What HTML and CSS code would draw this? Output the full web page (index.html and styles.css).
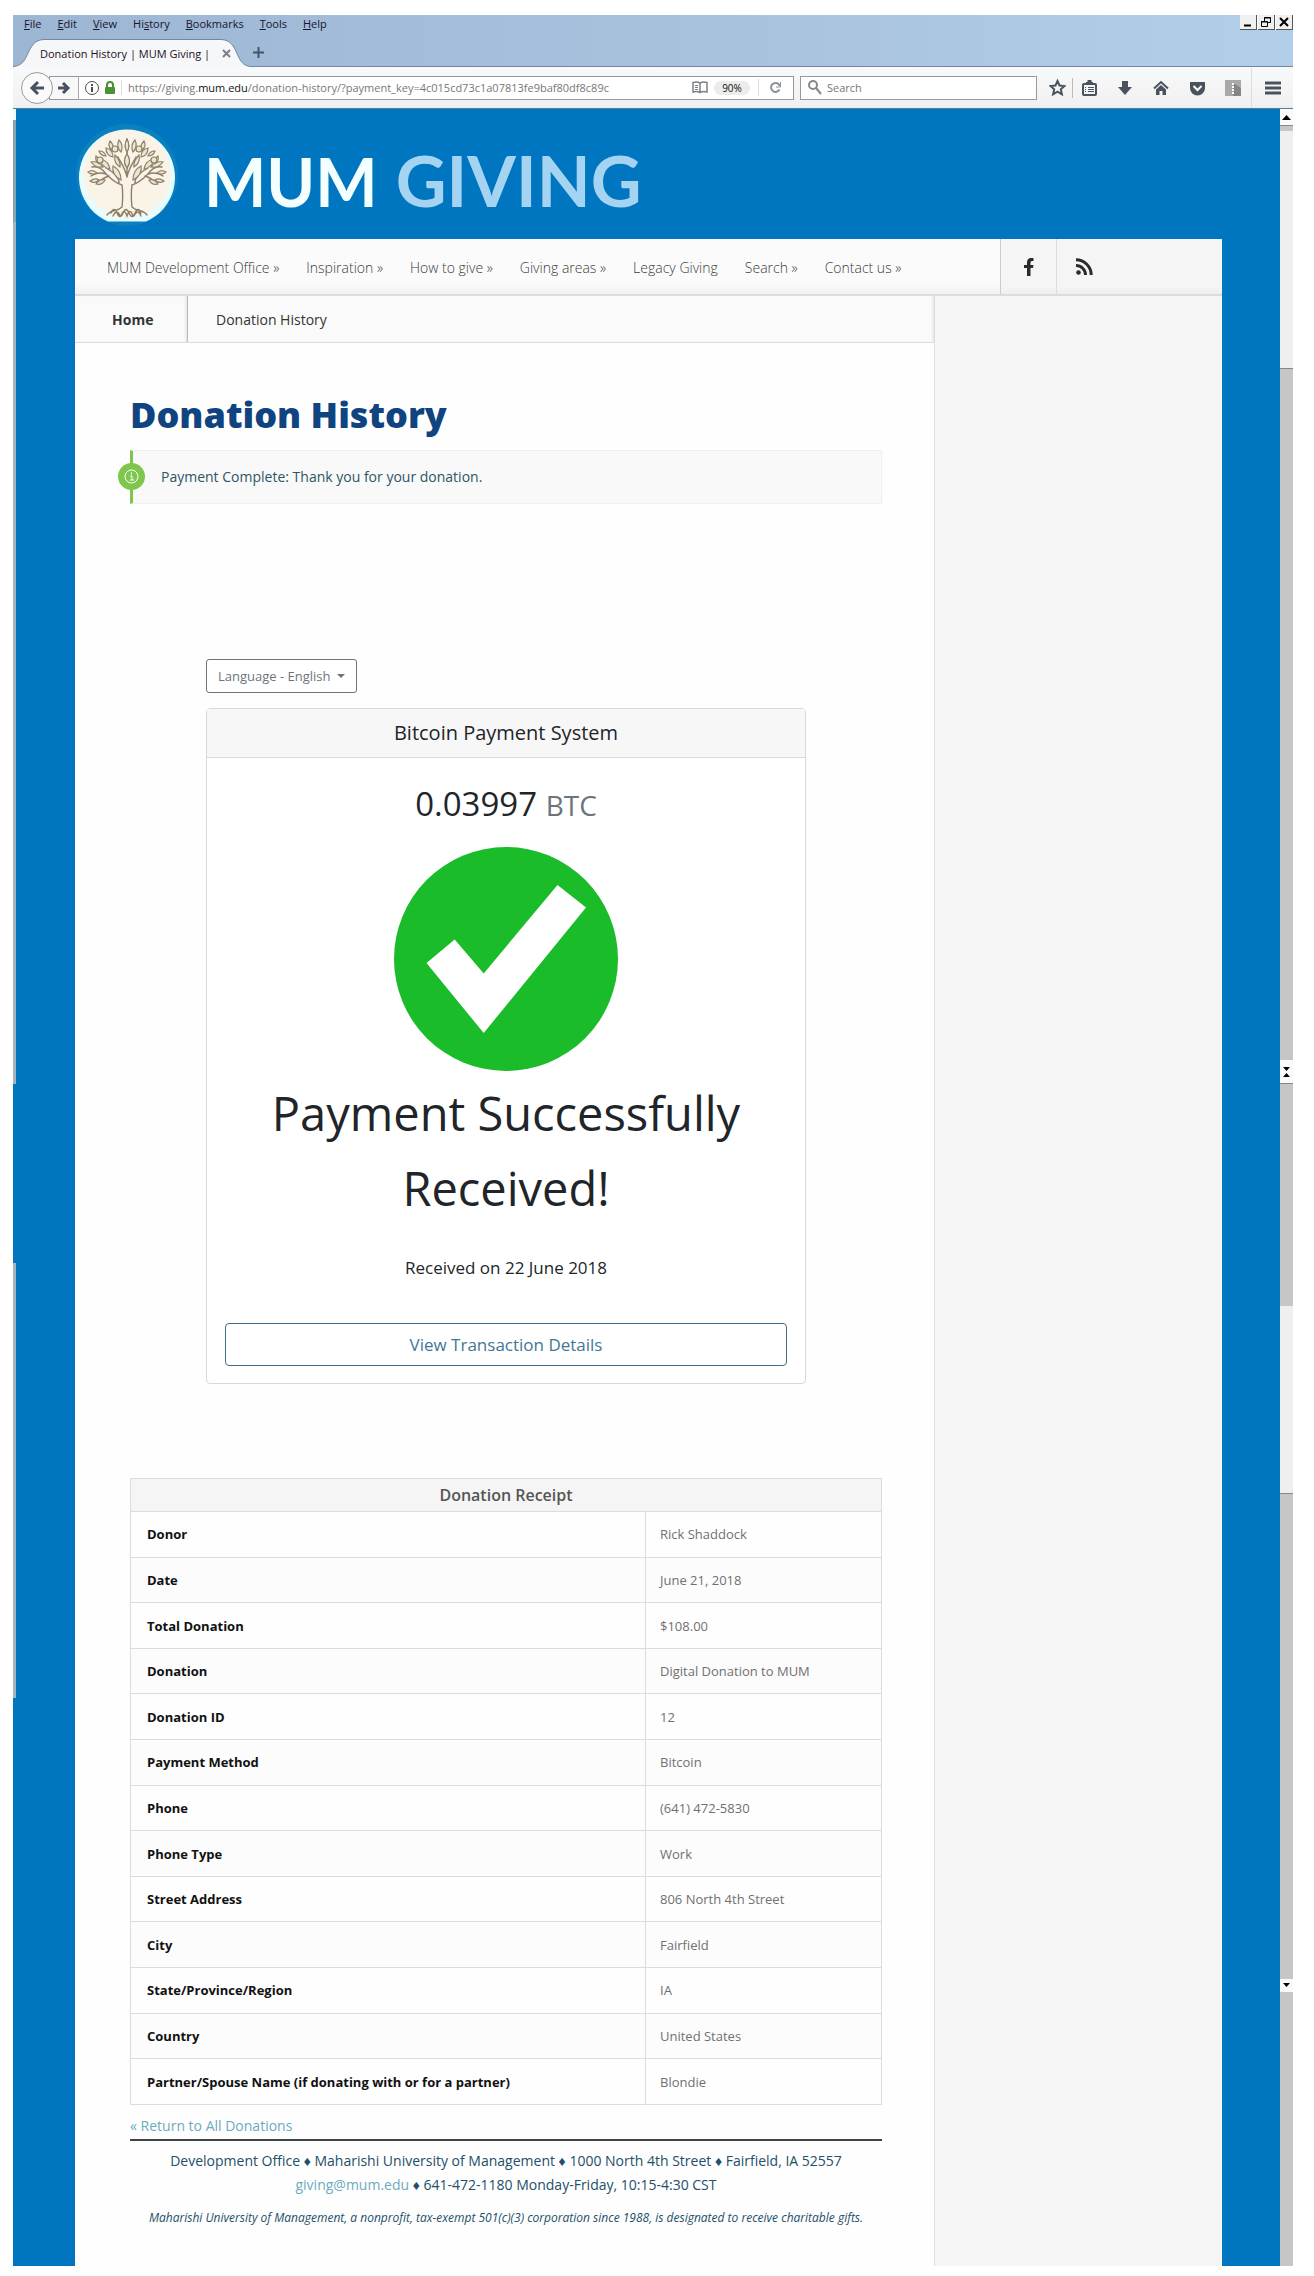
FILE: index.html
```html
<!DOCTYPE html>
<html lang="en">
<head>
<meta charset="utf-8">
<title>Donation History | MUM Giving</title>
<link rel="stylesheet" href="styles.css">
</head>
<body>
<div class="window">
  <header class="chrome">
    <div class="titlebar">
      <nav class="menu" aria-label="Menu bar">
        <button><u>F</u>ile</button><button><u>E</u>dit</button><button><u>V</u>iew</button><button>Hi<u>s</u>tory</button><button><u>B</u>ookmarks</button><button><u>T</u>ools</button><button><u>H</u>elp</button>
      </nav>
      <div class="controls">
        <button aria-label="Minimize"><svg width="12" height="12"><path d="M2 9.500h7" stroke="#000" stroke-width="2"/></svg></button>
        <button aria-label="Restore"><svg width="12" height="12" fill="none" stroke="#000"><path d="M4.500 5V1.500h6v5H8M4 2h7M1.500 5.500h6v5h-6zM1 6h7"/></svg></button>
        <button aria-label="Close"><svg width="12" height="12"><path d="M2 2l8 8M10 2l-8 8" stroke="#000" stroke-width="2"/></svg></button>
      </div>
    </div>
    <div class="tabs">
      <div class="tab">
        <svg class="tab-shape" width="238" height="28" aria-hidden="true"><path d="M0 27.500C18 27 12 1 31 .5H208C227 1 221 27 238 27.500V28H0z" fill="#f6f7f8"/><path d="M0 27.500C18 27 12 1 31 .5H208C227 1 221 27 238 27.500" fill="none" stroke="#75879c"/></svg>
        <span class="tab-title">Donation History | MUM Giving |</span>
        <button class="plain" aria-label="Close tab"><svg width="9" height="9"><path d="M1 1l7 7M8 1l-7 7" stroke="#7b8086" stroke-width="2"/></svg></button>
      </div>
      <button class="plain new-tab" aria-label="New tab"><svg width="11" height="11"><path d="M5.500 0v11M0 5.500h11" stroke="#45546a" stroke-width="2"/></svg></button>
    </div>
    <div class="toolbar">
      <button class="back" aria-label="Back"><svg width="16" height="16" fill="none" stroke="#4a5260" stroke-width="3"><path d="M9 2L3 8l6 6M3 8h12"/></svg></button>
      <div class="urlbar">
        <button class="plain forward" aria-label="Forward"><svg width="14" height="14" fill="none" stroke="#4a5260" stroke-width="3"><path d="M6 2l5 5-5 5M11 7H1"/></svg></button>
        <svg width="14" height="14" fill="none" stroke="#4c4c4c"><circle cx="7" cy="7" r="6.500"/><path d="M7 3v2M7 6v5" stroke-width="2"/></svg>
        <svg class="lock" width="12" height="14"><path d="M3 7V4a3 3 0 0 1 6 0v3" fill="none" stroke="#4c9034" stroke-width="2"/><rect x="1" y="6" width="10" height="7" rx="1" fill="#4c9034"/></svg>
        <span class="url">https://giving.<b>mum.edu</b>/donation-history/?payment_key=4c015cd73c1a07813fe9baf80df8c89c</span>
        <svg class="reader" width="16" height="13" fill="none" stroke="#7c8186" stroke-width="1.500"><path d="M8 11.500C6 10.500 3 10.500 1 11V1.500C3 1 6 1 8 2c2-1 5-1 7-.5V11C13 10.500 10 10.500 8 11.500zM8 2v9"/><path d="M3 4.500h3M3 6.500h3M3 8.500h3" stroke-width="1"/></svg>
        <span class="zoom">90%</span>
        <button class="plain reload" aria-label="Reload"><svg width="13" height="13" fill="none" stroke="#8b9299" stroke-width="2"><path d="M10.500 8.500A4.500 4.500 0 1 1 9.500 3L11 5"/><path d="M11.500 1v5H7" stroke-width="1"/></svg></button>
      </div>
      <div class="search">
        <svg width="15" height="15" fill="none" stroke="#85898d" stroke-width="2"><circle cx="6" cy="5" r="4"/><path d="M9 8l5 6"/></svg>
        <input type="text" placeholder="Search" aria-label="Search">
      </div>
      <div class="tools">
        <button class="plain star" aria-label="Bookmark"><svg width="17" height="17" fill="none" stroke="#4a5260" stroke-width="2"><path d="M8.500 2l2 4.500 5 .5-3.700 3.300 1.100 5-4.400-2.600-4.400 2.600 1.100-5L1.500 7l5-.5z"/></svg></button>
        <button class="plain" aria-label="Library"><svg width="15" height="16" fill="none" stroke="#4a5260"><rect x="1" y="4" width="13" height="11" rx="1" stroke-width="2"/><path d="M4 3h7M5.500 1h4" stroke-width="2"/><path d="M3 7.500h1M6 7.500h6M3 9.500h1M6 9.500h6M3 11.500h1M6 11.500h6"/></svg></button>
        <button class="plain" aria-label="Downloads"><svg width="16" height="16" fill="#4a5260"><path d="M5 1h6v6h4l-7 8-7-8h4z"/></svg></button>
        <button class="plain" aria-label="Home"><svg width="16" height="16"><path d="M1 8.500L8 2l7 6.500" fill="none" stroke="#4a5260" stroke-width="2"/><path d="M3 9.500L8 5l5 4.500V15H9.500v-4h-3v4H3z" fill="#4a5260"/></svg></button>
        <button class="plain" aria-label="Pocket"><svg width="17" height="16"><path d="M1 2h15v6a7 7 0 0 1-15 0z" fill="#4a5260"/><path d="M4.500 6l4 4 4-4" fill="none" stroke="#fff" stroke-width="2"/></svg></button>
        <button class="plain" aria-label="Add-on"><svg width="16" height="16"><path d="M0 0h16v16H0z" fill="#a9a9a9"/><path d="M8 3l8 5v8H8z" fill="#858585"/><path d="M8 3v11" stroke="#fff" stroke-width="2" stroke-dasharray="2 1"/></svg></button>
        <button class="plain burger" aria-label="Menu"><svg width="16" height="14" stroke="#4a5260" stroke-width="3"><path d="M0 2h16M0 7h16M0 12h16"/></svg></button>
      </div>
    </div>
  </header>

  <div class="viewport">
    <div class="edge" aria-hidden="true"><i class="pale"></i><i class="steel"></i><i class="silver"></i><i class="blue"></i><i class="silver low"></i><i class="blue end"></i></div>
    <div class="site">
      <div class="brand">
        <svg class="logo" width="104" height="104" viewBox="0 0 104 104" role="img" aria-label="Tree logo">
          <circle cx="52" cy="52" r="51" fill="#0b80bd"/>
          <path d="M33 98.500a48 48 0 1 1 38 0z" fill="#e6fdff"/>
          <circle cx="52" cy="51" r="44" fill="#faf3e8"/>
          <g fill="none" stroke="#8c8069" stroke-width="1.400" stroke-linecap="round">
            <path d="M47 84c1-9 1-15 0-22-7-2-12-7-16-11M57 84c-1-9-1-15 0-22 7-2 12-7 16-11M47 84c-5 5-11 2-15 8M57 84c5 5 11 2 15 8M52 54c-2-9-6-14-9-20M52 54c2-9 6-14 9-20M52 54V22M44 60c0-8-8-12-13-15M60 60c0-8 8-12 13-15"/>
            <path d="M31 51c-6-2-11-1-15 2M73 51c6-2 11-1 15 2M31 51c-4-6-9-8-14-7M73 51c4-6 9-8 14-7M34 53c-6 2-9 4-11 8M70 53c6 2 9 4 11 8"/>
            <path d="M36 90q3-7 6 0t6 0 6 0 6 0 6 0M38 93q4-8 7 0M46 93q3-9 6 0 3-9 6 0M59 93q4-8 7 0"/>
          </g>
          <g fill="#eee4d0" stroke="#8c8069" stroke-width="1.200">
            <g id="half">
              <path d="M52 45c-4-6-3-10 0-14 3 4 4 8 0 14zM52 29c-3-5-2-9 0-13 2 4 3 8 0 13zM46 29c-4-4-4-8-2-12 3 3 4 7 2 12zM46 57c-6-3-9-8-8-14 6 3 8 8 8 14zM35 46c-6-1-9-5-10-10 6 1 9 5 10 10zM45 44c-5-3-6-7-5-12 4 4 6 7 5 12zM38 34c-5-1-7-4-7-9 5 1 7 4 7 9zM28 44c-6 1-9-1-12-5 5-1 9 1 12 5zM22 50c-4 2-7 1-9-1 3-2 6-2 9 1zM24 57c-3 3-6 3-9 1 3-2 6-3 9-1zM31 33c-4 0-6-2-7-5 4 0 6 2 7 5zM37 27c-3-2-4-5-2-9 3 3 4 6 2 9zM30 57c-2 4-5 5-9 4 2-3 5-5 9-4zM25 41c-3-1-5-4-4-8 3 2 4 5 4 8z"/>
              <circle cx="40" cy="26" r="3"/><circle cx="25" cy="37" r="3"/>
            </g>
            <use href="#half" transform="matrix(-1 0 0 1 104 0)"/>
          </g>
        </svg>
        <div class="wordmark"><span class="mum">MUM</span><span class="giving">GIVING</span></div>
      </div>
      <div class="page">
        <div class="topbar">
          <nav class="mainnav" aria-label="Main">
            <a href="#">MUM Development Office »</a><a href="#">Inspiration »</a><a href="#">How to give »</a><a href="#">Giving areas »</a><a href="#">Legacy Giving</a><a href="#">Search »</a><a href="#">Contact us »</a>
          </nav>
          <a class="social" href="#" aria-label="Facebook"><svg width="10" height="18"><path d="M3 18V10H0V7h3V4.500C3 1.500 4.500 0 7 0h2.500v3H8Q6.500 3 6.500 4.500V7h3L9 10H6.500v8z" fill="#2b2b2b"/></svg></a>
          <a class="social" href="#" aria-label="RSS feed"><svg width="17" height="17" fill="none" stroke="#2b2b2b" stroke-width="3"><circle cx="2.500" cy="14.500" r="2.300" fill="#2b2b2b" stroke="none"/><path d="M0 7.500A9.500 9.500 0 0 1 9.500 17M0 1.800A15.200 15.200 0 0 1 15.200 17"/></svg></a>
        </div>
        <div class="columns">
          <div class="content">
            <nav class="crumbs" aria-label="Breadcrumb"><a class="home" href="#">Home</a><span class="here">Donation History</span></nav>
            <main class="main">
              <h1>Donation History</h1>
              <div class="notice">
                <span class="badge"><svg width="27" height="27"><circle cx="13.500" cy="13.500" r="13.500" fill="#7ec74c"/><circle cx="13.500" cy="13.500" r="6.500" fill="none" stroke="#fff"/><path d="M13.500 9.500v2M12 13h2v4M12 17h4" stroke="#fff" fill="none"/></svg></span>
                Payment Complete: Thank you for your donation.
              </div>
              <div class="payment">
                <button class="language">Language - English <span class="caret"></span></button>
                <section class="card">
                  <h2>Bitcoin Payment System</h2>
                  <div class="card-body">
                    <p class="amount">0.03997 <small>BTC</small></p>
                    <svg class="check" width="224" height="224" viewBox="0 0 224 224" role="img" aria-label="Success"><circle cx="112" cy="112" r="112" fill="#1bbc29"/><path d="M163.500 38L192 60.500 89.700 186 32.500 116 60.700 92.500 89.700 126.500z" fill="#fff"/></svg>
                    <p class="success">Payment Successfully Received!</p>
                    <p class="received">Received on 22 June 2018</p>
                    <button class="details">View Transaction Details</button>
                  </div>
                </section>
              </div>
              <table class="receipt">
                <thead><tr><th colspan="2">Donation Receipt</th></tr></thead>
                <tbody>
                  <tr><th scope="row">Donor</th><td>Rick Shaddock</td></tr>
                  <tr><th scope="row">Date</th><td>June 21, 2018</td></tr>
                  <tr><th scope="row">Total Donation</th><td>$108.00</td></tr>
                  <tr><th scope="row">Donation</th><td>Digital Donation to MUM</td></tr>
                  <tr><th scope="row">Donation ID</th><td>12</td></tr>
                  <tr><th scope="row">Payment Method</th><td>Bitcoin</td></tr>
                  <tr><th scope="row">Phone</th><td>(641) 472-5830</td></tr>
                  <tr><th scope="row">Phone Type</th><td>Work</td></tr>
                  <tr><th scope="row">Street Address</th><td>806 North 4th Street</td></tr>
                  <tr><th scope="row">City</th><td>Fairfield</td></tr>
                  <tr><th scope="row">State/Province/Region</th><td>IA</td></tr>
                  <tr><th scope="row">Country</th><td>United States</td></tr>
                  <tr><th scope="row">Partner/Spouse Name (if donating with or for a partner)</th><td>Blondie</td></tr>
                </tbody>
              </table>
              <a class="return" href="#">« Return to All Donations</a>
              <footer class="footer">
                <p>Development Office ♦ Maharishi University of Management ♦ 1000 North 4th Street ♦ Fairfield, IA 52557</p>
                <p><a href="#">giving@mum.edu</a> ♦ 641-472-1180 Monday-Friday, 10:15-4:30 CST</p>
                <p class="legal">Maharishi University of Management, a nonprofit, tax-exempt 501(c)(3) corporation since 1988, is designated to receive charitable gifts.</p>
              </footer>
            </main>
          </div>
          <aside class="sidebar"></aside>
        </div>
      </div>
    </div>
    <div class="scrollbar" aria-hidden="true">
      <div class="arrow first"><svg width="9" height="5"><path d="M0 5l4.500-5L9 5z"/></svg></div>
      <i class="thumb t1"></i><i class="track k1"></i><i class="thumb t2"></i>
      <div class="arrow pair"><svg width="7" height="4"><path d="M0 0h7L3.500 4z"/></svg><svg width="7" height="4"><path d="M0 4h7L3.500 0z"/></svg></div>
      <i class="thumb t3"></i><i class="track k2"></i><i class="thumb t4"></i>
      <div class="arrow last"><svg width="7" height="4"><path d="M0 0h7L3.500 4z"/></svg></div>
      <i class="thumb t5"></i>
    </div>
  </div>
</div>
</body>
</html>
```
FILE: styles.css
```css
* { box-sizing: border-box; }
body { margin: 0; padding: 15px 21px 10px 13px; background: #fff; font-family: "Open Sans", "Noto Sans", sans-serif; color: #222; }
h1, h2, p { margin: 0; }
a { text-decoration: none; color: inherit; }
button, input { font-family: inherit; }
svg { display: block; flex: none; }
i { display: block; }

/* browser chrome */
.chrome { background: linear-gradient(90deg, #9cb6d4, #a9c3df 60%, #b2cfe9); }
.titlebar { display: flex; justify-content: space-between; height: 18px; }
.menu { display: flex; gap: 16px; padding-left: 11px; }
.menu button, .plain { border: 0; padding: 0; background: none; }
.menu button { font-size: 11px; line-height: 18px; color: #17142b; }
.controls { display: flex; gap: 1px; background: #fff; height: 15px; }
.controls button { width: 17px; height: 15px; padding: 0 0 0 2px; background: #f0f0f0; border: 0; border-right: 1px solid #555; border-bottom: 1px solid #555; }
.tabs { display: flex; align-items: flex-end; height: 34px; border-bottom: 1px solid #75879c; }
.tab { position: relative; display: flex; align-items: center; gap: 12px; width: 238px; height: 27px; padding-left: 27px; margin-bottom: -1px; }
.tab-shape { position: absolute; left: 0; bottom: 0; }
.tab-title { position: relative; font-size: 11px; color: #1d0f24; }
.tab button { position: relative; }
.new-tab { margin: 0 0 8px 2px; }
.toolbar { display: flex; align-items: center; height: 42px; padding-left: 8px; background: linear-gradient(#f8f9fa, #f1f1f1 94%, #def0f6); border-bottom: 1px solid #55818f; }
.back { position: relative; width: 32px; height: 32px; padding: 0 0 0 7px; border: 1px solid #9b9b9b; border-radius: 50%; background: #fafafa; }
.urlbar { display: flex; align-items: center; flex: 1; height: 24px; margin-left: -4px; border: 1px solid #999; background: #fff; font-size: 11px; }
.forward { display: grid; place-items: center; width: 29px; height: 22px; margin-right: 6px; border-right: 1px solid #aaa; background: #f8f8f8; }
.lock { margin-left: 5px; }
.url { flex: 1; margin-left: 5px; padding-left: 6px; border-left: 1px solid #ddd; color: #777; }
.url b { font-weight: 400; color: #111; }
.zoom { margin: 0 8px 0 6px; width: 36px; border-radius: 7px; background: #ececec; text-align: center; font-size: 10px; line-height: 14px; color: #111; }
.reload { padding: 2px 11px 2px 10px; border-left: 1px solid #ddd; }
.search { display: flex; align-items: center; gap: 5px; width: 237px; height: 24px; margin-left: 6px; padding-left: 6px; border: 1px solid #999; background: #fff; }
.search input { width: 180px; border: 0; padding: 0; background: none; font-size: 11px; outline: 0; }
.search input::placeholder { color: #777; opacity: 1; }
.tools { display: flex; align-items: center; margin-left: 6px; }
.tools button { display: grid; place-items: center; width: 36px; height: 20px; }
.tools .star { width: 30px; border-right: 1px solid #bbb; margin-right: -2px; }
.tools .burger { width: 42px; height: 40px; border-left: 1px solid #ddd; }

/* page viewport */
.viewport { display: flex; }
.edge { display: flex; flex-direction: column; width: 3px; }
.edge .pale { flex: 11; background: #e9fbff; }
.edge .steel { flex: 102; background: #86a5b4; }
.edge .silver { flex: 862; background: #a3b4ba; }
.edge .blue { flex: 179; background: #0076c0; }
.edge .low { flex: 435; }
.edge .end { flex: 568; }
.site { flex: 1; padding: 0 58px 0 59px; background: #0076c0; }
.brand { display: flex; align-items: center; height: 130px; padding-top: 2px; }
.logo { margin-right: 25px; }
.wordmark { display: flex; align-items: baseline; gap: 18px; padding-top: 12px; font-family: Lato, sans-serif; line-height: 70px; font-weight: 700; }
.mum { font-size: 66px; color: #f4ffff; }
.giving { font-size: 70px; color: #a5d3f2; }
.page { background: #fefefe; }
.topbar { display: flex; height: 57px; border-bottom: 2px solid #dcdcdc; background: linear-gradient(#f5f5f5 85%, #efefef); }
.mainnav { display: flex; align-items: center; flex: 1; gap: 27px; padding: 2px 0 0 32px; background: linear-gradient(#fbfbfb 80%, #f1f1f1); border-right: 1px solid #ccc; font-size: 14px; font-weight: 300; color: #3c3c3c; }
.social { display: grid; place-items: center; width: 55px; }
.social + .social { width: 166px; padding-right: 110px; border-left: 1px solid #ddd; }
.columns { display: flex; }
.content { flex: 1; min-width: 0; }
.sidebar { width: 288px; background: #f5f5f5; border-left: 1px solid #ddd; }
.crumbs { display: flex; height: 47px; border-bottom: 1px solid #ddd; background: #fafafa; font-size: 14px; line-height: 48px; color: #333; box-shadow: inset -3px 0 3px -2px #ddd; }
.home { width: 113px; padding-left: 37px; border-right: 1px solid #bbb; font-weight: 700; box-shadow: inset -3px 0 3px -2px #ddd; }
.here { padding-left: 28px; }
.main { padding: 48px 52px 38px 55px; }
h1 { font-size: 36px; line-height: 48px; font-weight: 800; color: #0f4480; }
.notice { position: relative; margin-top: 11px; height: 54px; padding-left: 28px; border: 1px solid #f0f0f0; border-left: 3px solid #7ec74c; background: #f9f9f9; font-size: 14px; line-height: 52px; color: #2c5566; }
.badge { position: absolute; left: -15px; top: 12px; }
.payment { width: 600px; max-width: 100%; margin: 155px auto 0; }
.language { display: flex; align-items: center; gap: 6px; height: 34px; padding: 0 11px; border: 1px solid #6c757d; border-radius: 3px; background: #fff; font-size: 13px; color: #6c757d; }
.caret { border: 4px solid transparent; border-top-color: #6c757d; border-bottom: 0; }
.card { margin-top: 15px; border: 1px solid #d9d9d9; border-radius: 4px; background: #fff; text-align: center; color: #212529; }
.card h2 { border-bottom: 1px solid #d9d9d9; background: #f7f7f7; font-size: 20px; line-height: 48px; font-weight: 400; }
.card-body { padding: 26px 18px 17px; }
.amount { font-size: 33px; line-height: 40px; }
.amount small { font-size: 28px; color: #6c757d; }
.check { margin: 22px auto 5px; }
.success { padding: 0 40px; font-size: 47px; line-height: 75px; }
.received { margin: 30px 0 43px; font-size: 17px; line-height: 24px; }
.details { width: 100%; height: 43px; border: 1px solid #3d6f8c; border-radius: 4px; background: #fff; font-size: 17px; color: #3f7796; }
.receipt { width: 100%; height: 627px; margin-top: 94px; border-collapse: collapse; text-align: left; font-size: 13px; line-height: 18px; }
.receipt th, .receipt td { padding: 0 16px; border: 1px solid #dcdcdc; }
.receipt thead th { height: 33px; background: #f5f5f5; text-align: center; font-size: 16px; font-weight: 600; color: #555; }
.receipt tbody tr:nth-child(even) { background: #fcfcfc; }
.receipt tbody th { color: #111; }
.receipt td { width: 236px; padding-left: 14px; color: #707070; }
.return { display: block; margin-top: 11px; font-size: 14px; line-height: 20px; color: #6caac0; }
.footer { margin-top: 3px; padding-top: 8px; border-top: 2px solid #3f4447; text-align: center; font-size: 14px; line-height: 24px; color: #234f68; }
.footer a { color: #6caac0; }
.legal { margin-top: 11px; font-size: 12px; line-height: 20px; font-style: italic; }

/* scroll bar */
.scrollbar { display: flex; flex-direction: column; width: 13px; }
.thumb { background: #c6c6c6; border-top: 1px solid #888; }
.track { background: #efefef; }
.t1 { flex: 5; }
.k1 { flex: 237; }
.t2 { flex: 693; }
.t3 { flex: 222; }
.k2 { flex: 188; }
.t4 { flex: 485; }
.t5 { flex: 275; border: 0; }
.arrow { display: flex; flex-direction: column; align-items: center; justify-content: center; gap: 2px; background: #fafafa; }
.first { height: 16px; }
.pair { height: 23px; }
.last { height: 13px; }
```
